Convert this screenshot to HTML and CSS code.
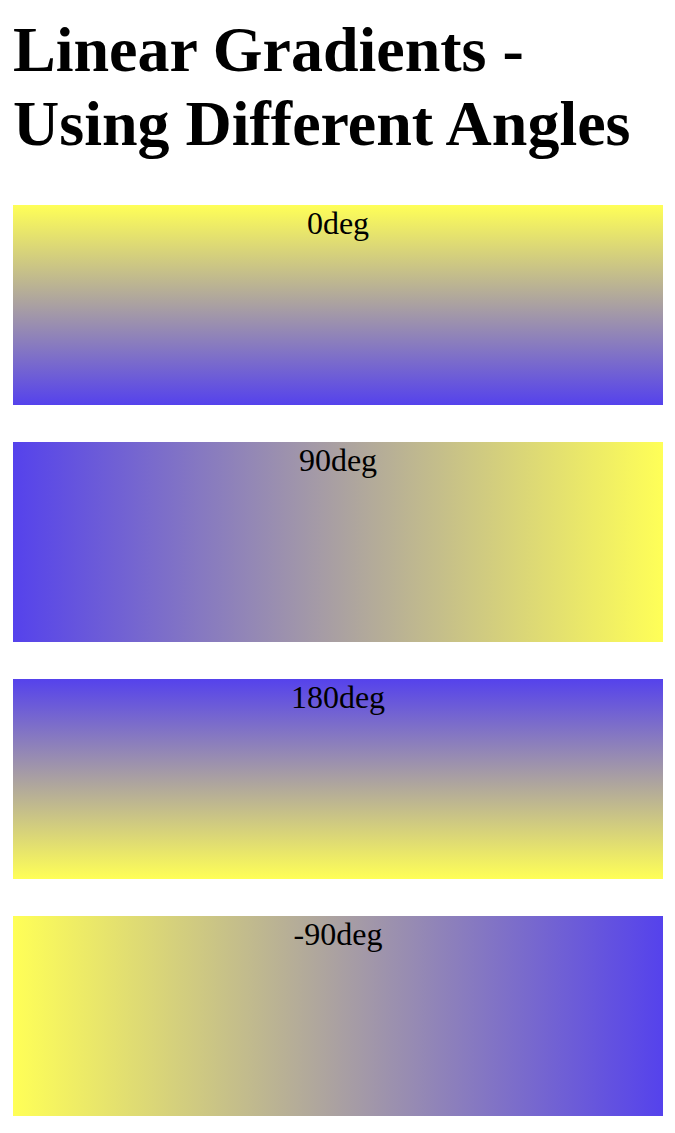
FILE: index.html
```html
<html>
    <head>
        <link rel="stylesheet" href="styles.css">
        <title>Linear Gradients</title>
    </head>
    <body>
        <h1 class="title">Linear Gradients -<br>Using Different Angles</h1>

        <div class="grad grad0">0deg</div><br>
        <div class="grad grad90">90deg</div><br>
        <div class="grad grad180">180deg</div><br>
        <div class="grad grad-90">-90deg</div>
    </body>
</html>
```

FILE: styles.css
```css
body{
    margin: 13px 12px 13px 13px;
    font-family: "Liberation Serif", "Times New Roman", serif;
    font-size: 32px;
    color: #000;
    background: #fff;
}
.title{
    font-size: 64px;
    font-weight: bold;
    margin: 0 0 44px 0;
}
.grad{
    height: 200px;
    text-align: center;
    background-color: #5542ec;
}
.grad0{
    background-image: linear-gradient(0deg, #5542ec, #ffff57);
}
.grad90{
    background-image: linear-gradient(90deg, #5542ec, #ffff57);
}
.grad180{
    background-image: linear-gradient(180deg, #5542ec, #ffff57);
}
.grad-90{
    background-image: linear-gradient(-90deg, #5542ec, #ffff57);
}
```
